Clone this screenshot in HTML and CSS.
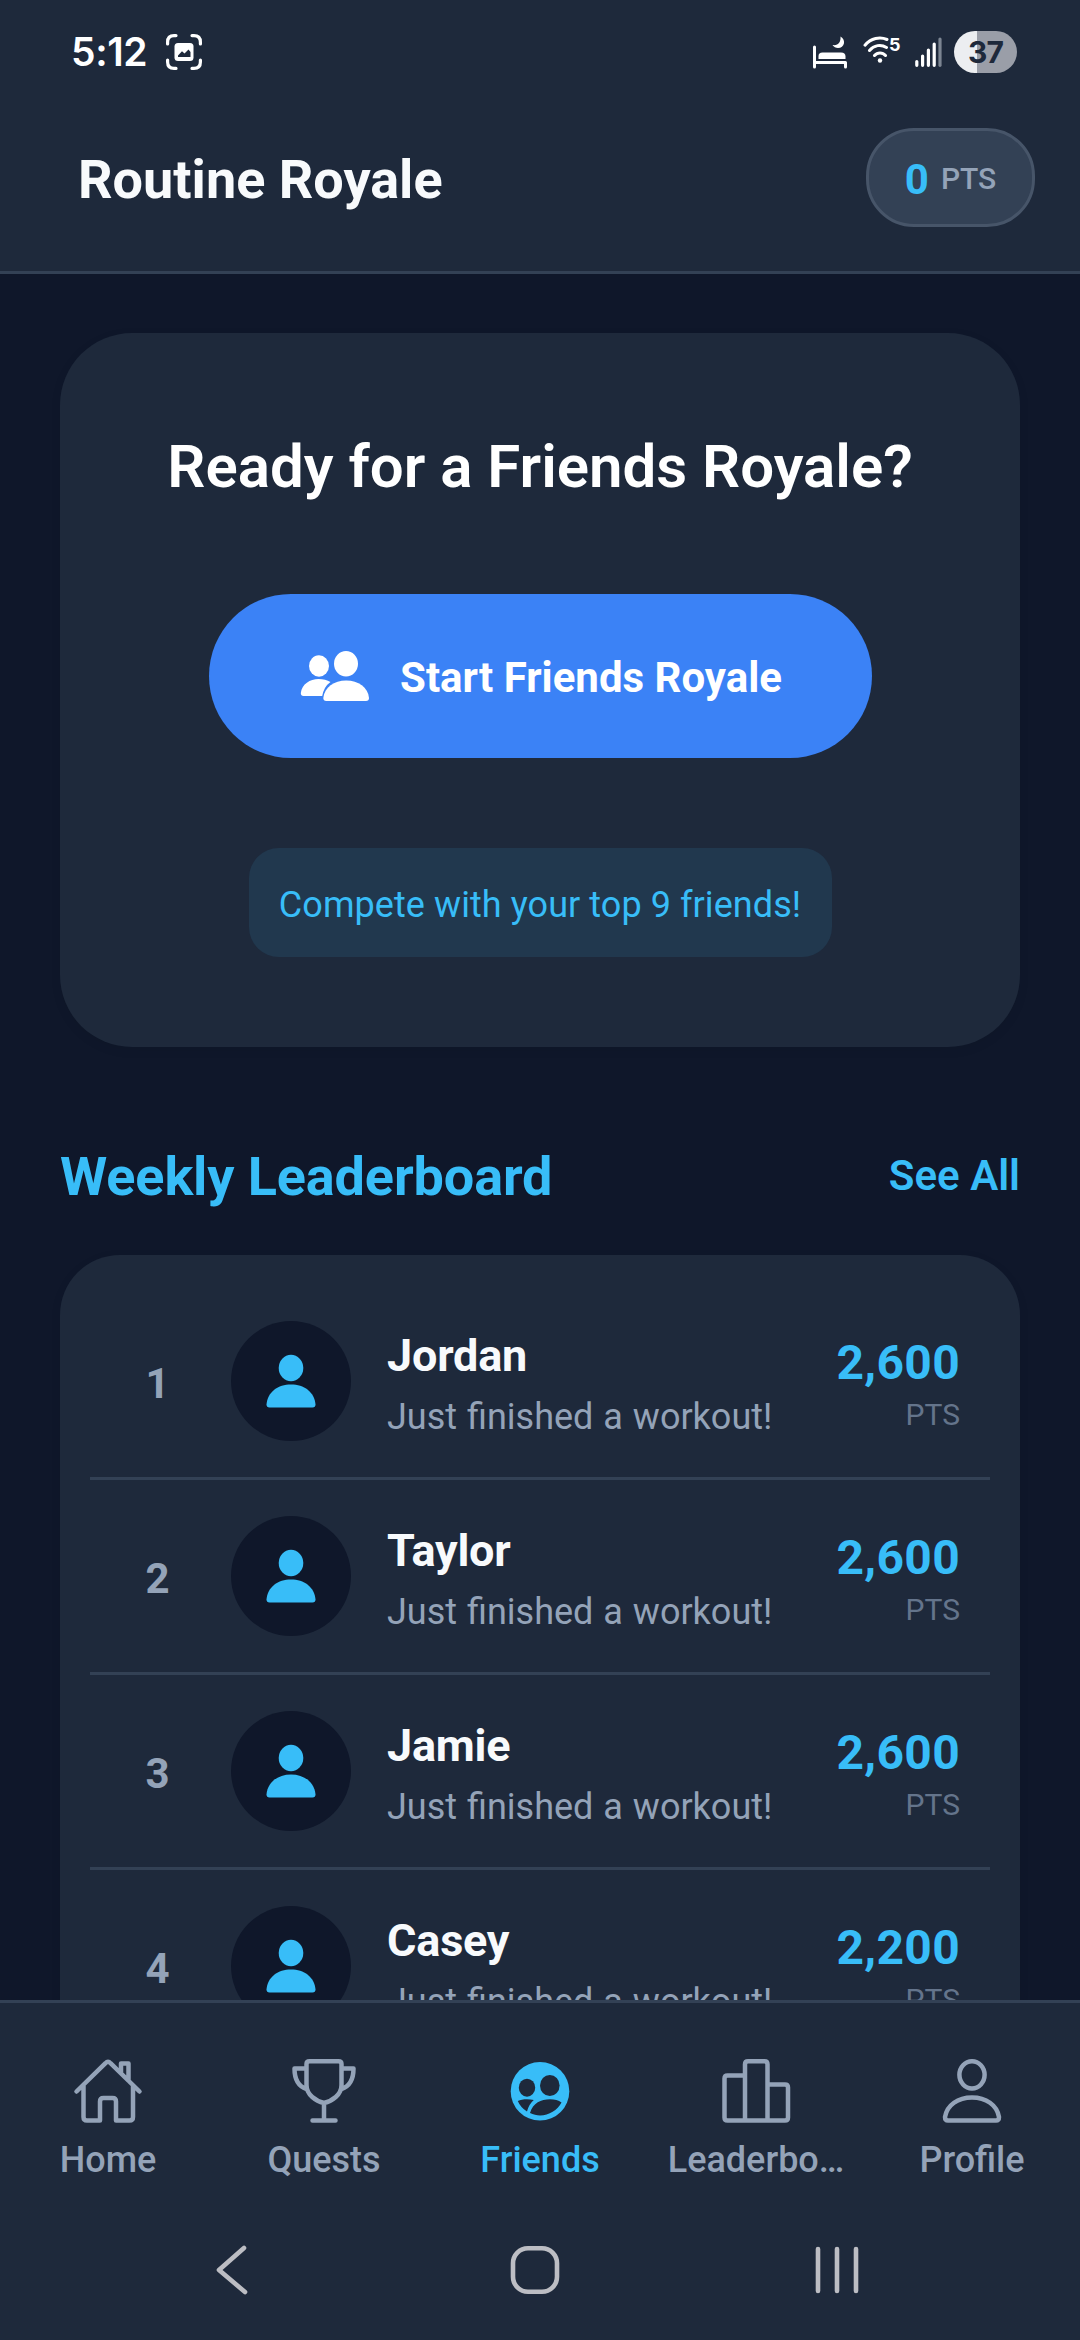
FILE: index.html
```html
<!DOCTYPE html>
<html lang="en">
<head>
<meta charset="utf-8">
<title>Routine Royale</title>
<link rel="stylesheet" href="styles.css">
</head>
<body>
<svg class="defs" width="0" height="0" aria-hidden="true">
  <symbol id="person" viewBox="0 0 60 60">
    <ellipse cx="30" cy="17" rx="12.3" ry="13.2"/>
    <path d="M5.5 53.500C6.500 41 17 33.500 30 33.500S53.500 41 54.500 53.500Q54.500 56.500 51.500 56.500H8.500Q5.500 56.500 5.500 53.500Z"/>
  </symbol>
</svg>
<div class="screen">
  <header class="header">
    <div class="status">
      <div class="status-left">
        <span class="clock">5:12</span>
        <svg width="36" height="36" viewBox="0 0 36 36" fill="none" stroke="#fff" stroke-width="3.2" stroke-linecap="round">
          <path d="M1.600 10V8Q1.600 1.600 8 1.600H10M26 1.600H28Q34.400 1.600 34.400 8V10M34.400 26V28Q34.400 34.400 28 34.400H26M10 34.400H8Q1.600 34.400 1.600 28V26"/>
          <rect x="8.500" y="9" width="19" height="18" rx="3.500" fill="#fff" stroke="none"/>
          <path d="M12 23V21.500L16 17.200L18.500 19.500L22.500 15.500L24.500 18V23Z" fill="#1e293b" stroke="none"/>
        </svg>
      </div>
      <div class="status-right">
        <svg width="36" height="33" viewBox="0 0 36 33" fill="#fff">
          <path d="M1.500 11V31M1.500 26.500H32.500V31" fill="none" stroke="#fff" stroke-width="3" stroke-linecap="round" stroke-linejoin="round"/>
          <path d="M5.500 23V20Q5.500 16.500 9.500 16.500H28Q32.500 16.500 32.500 20.500V23Z"/>
          <path d="M27.500 0.500C33.500 4 31.500 12 25 12Q21.500 12 19.500 9C25 10 28 6 27.500 0.500Z"/>
        </svg>
        <div class="wifi">
          <svg width="26" height="28" viewBox="0 0 26 28" fill="none" stroke="#fff" stroke-width="3" stroke-linecap="round">
            <path d="M2 9.200C8 2 17 .5 24 3.500M6.500 14.500C11 9 18 8 23.500 11.500M11.500 19.500C14.500 16 19.500 16 22.500 19.500"/>
            <circle cx="17" cy="24.500" r="2.200" fill="#fff" stroke="none"/>
          </svg>
          <span class="wifi-num">5</span>
        </div>
        <svg class="signal" width="27" height="30" viewBox="0 0 27 30" stroke="#fff" stroke-width="3.200" stroke-linecap="round">
          <path d="M1.800 24.500V28.300M7.600 19V28.300M13.400 13V28.300M19.200 7V28.300"/>
          <path d="M25 2V28.300" stroke="#7c8592"/>
        </svg>
        <span class="battery">37</span>
      </div>
    </div>
    <div class="appbar">
      <h1 class="app-title">Routine Royale</h1>
      <div class="points"><span class="points-num">0</span><span class="points-unit">PTS</span></div>
    </div>
  </header>

  <main class="content">
    <section class="royale">
      <h2 class="royale-title">Ready for a Friends Royale?</h2>
      <div class="start">
        <svg width="70" height="52" viewBox="0 0 70 52" fill="#fff">
          <ellipse cx="19" cy="16" rx="10" ry="10.700"/>
          <ellipse cx="46" cy="13.700" rx="12" ry="12.700"/>
          <path d="M.8 43C2 34 10 29 18.500 29Q25.500 29 30.500 32Q24 36.500 22.200 46H3.500Q.8 46 .8 43Z"/>
          <path d="M23.300 48C24.500 37 34 30.500 46.200 30.500S68 37 69 48Q69 51 66 51H26.300Q23.300 51 23.300 48Z"/>
        </svg>
        <span class="start-text">Start Friends Royale</span>
      </div>
      <div class="hint">Compete with your top 9 friends!</div>
    </section>

    <div class="section-head">
      <h2 class="section-title">Weekly Leaderboard</h2>
      <span class="see-all">See All</span>
    </div>

    <section class="board">
      <div class="row">
        <span class="rank">1</span>
        <span class="avatar"><svg width="60" height="60"><use href="#person"/></svg></span>
        <div class="who"><div class="name">Jordan</div><div class="note">Just finished a workout!</div></div>
        <div class="score"><div class="score-num">2,600</div><div class="score-unit">PTS</div></div>
      </div>
      <div class="row">
        <span class="rank">2</span>
        <span class="avatar"><svg width="60" height="60"><use href="#person"/></svg></span>
        <div class="who"><div class="name">Taylor</div><div class="note">Just finished a workout!</div></div>
        <div class="score"><div class="score-num">2,600</div><div class="score-unit">PTS</div></div>
      </div>
      <div class="row">
        <span class="rank">3</span>
        <span class="avatar"><svg width="60" height="60"><use href="#person"/></svg></span>
        <div class="who"><div class="name">Jamie</div><div class="note">Just finished a workout!</div></div>
        <div class="score"><div class="score-num">2,600</div><div class="score-unit">PTS</div></div>
      </div>
      <div class="row">
        <span class="rank">4</span>
        <span class="avatar"><svg width="60" height="60"><use href="#person"/></svg></span>
        <div class="who"><div class="name">Casey</div><div class="note">Just finished a workout!</div></div>
        <div class="score"><div class="score-num">2,200</div><div class="score-unit">PTS</div></div>
      </div>
    </section>
  </main>

  <nav class="tabs">
    <div class="tab">
      <svg class="tab-icon" viewBox="0 0 72 72">
        <path d="M4.500 36.500L33.500 8.200Q36 5.500 38.500 8.200L67.500 36.500M11.500 31V62Q11.500 65.500 15 65.500H28V46.500Q28 43 31.500 43H40.500Q44 43 44 46.500V65.500H57.500Q61 65.500 61 62V31M49 17V8.500H56.500V25.500"/>
      </svg>
      <span class="tab-label">Home</span>
    </div>
    <div class="tab">
      <svg class="tab-icon" viewBox="0 0 72 72">
        <path d="M18.500 9Q18.500 6.200 21.500 6.200H50.500Q53.500 6.200 53.500 9V30C53.500 40 44 46 36 48C28 46 18.500 40 18.500 30ZM18.500 13.500H6.500C6.500 25 11 31.500 18.500 34M53.500 13.500H65.500C65.500 25 61 31.500 53.500 34M36 48V65.500M24.500 65.500H47.500"/>
      </svg>
      <span class="tab-label">Quests</span>
    </div>
    <div class="tab active">
      <svg class="tab-icon solid" viewBox="0 0 72 72">
        <circle cx="36" cy="36.200" r="29.300"/>
        <g class="cutout">
          <ellipse cx="23" cy="32.700" rx="8.200" ry="9"/>
          <ellipse cx="45.800" cy="30.500" rx="9.800" ry="10.500"/>
          <path d="M13.800 46C18 43.800 25 43.800 29.800 45Q25 49 23 56.500Q16.500 52.500 13.800 46ZM26 58C29 48 37 44.300 46 44.300Q53 44.300 57.500 47.500C52 58 38 64 26 58Z"/>
        </g>
      </svg>
      <span class="tab-label">Friends</span>
    </div>
    <div class="tab">
      <svg class="tab-icon" viewBox="0 0 72 72">
        <path d="M25 65.500V9.200Q25 6.200 28 6.200H44.500Q47.500 6.200 47.500 9.200V65.500M25 20.500H7.500Q4.500 20.500 4.500 23.500V62.500Q4.500 65.500 7.500 65.500H65Q68 65.500 68 62.500V32.500Q68 29.500 65 29.500H47.500"/>
      </svg>
      <span class="tab-label">Leaderbo…</span>
    </div>
    <div class="tab">
      <svg class="tab-icon" viewBox="0 0 72 72">
        <ellipse cx="36" cy="19.800" rx="12.600" ry="13.600"/>
        <path d="M9 62C11 50 22 42.500 36 42.500S61 50 63 62Q63 65.500 60 65.500H12Q9 65.500 9 62Z"/>
      </svg>
      <span class="tab-label">Profile</span>
    </div>
  </nav>

  <div class="sysnav">
    <svg width="60" height="60" viewBox="0 0 60 60"><path d="M42 8L17 30L43 52"/></svg>
    <svg width="60" height="60" viewBox="0 0 60 60"><rect x="8" y="8.200" width="44" height="43.600" rx="15"/></svg>
    <svg width="60" height="60" viewBox="0 0 60 60"><path d="M11 9V51M30 9V51M49 9V51"/></svg>
  </div>
</div>
</body>
</html>
```
FILE: styles.css
```css
* { box-sizing: border-box; margin: 0; padding: 0; }

body {
  background: #0f172a;
  font-family: Roboto, "Liberation Sans", sans-serif;
  color: #f8fafc;
}

svg { display: block; flex: none; }
.defs { position: absolute; }

.screen {
  width: 1080px;
  height: 2340px;
  display: flex;
  flex-direction: column;
  overflow: hidden;
  white-space: nowrap;
}

/* Header */
.header {
  height: 274px;
  flex: none;
  background: #1e293b;
  border-bottom: 3px solid #334155;
}

.status {
  height: 104px;
  padding: 0 63px 0 71px;
  display: flex;
  align-items: center;
  justify-content: space-between;
}

.status-left, .status-right { display: flex; align-items: center; }
.status-left { gap: 19px; }

.clock {
  font: 600 39px/40px Inter, sans-serif;
  letter-spacing: -.4px;
  color: #fff;
}

.wifi {
  width: 38px;
  height: 28px;
  margin: 0 0 4px 14px;
  display: flex;
  align-items: flex-start;
}

.wifi-num { font: 700 18px/18px Inter, sans-serif; color: #fff; }
.signal { margin: 0 12px 0 14px; }

.battery {
  width: 63px;
  height: 42px;
  border-radius: 21px;
  background: linear-gradient(90deg, #eceef1 23px, #9a9ea8 23px);
  color: #1e293b;
  font: 700 30px/42px Inter, sans-serif;
  letter-spacing: -1px;
  text-align: center;
}

.appbar {
  height: 147px;
  padding: 0 45px 0 78px;
  display: flex;
  align-items: center;
  justify-content: space-between;
}

.app-title { font-size: 54px; font-weight: 700; line-height: 64px; padding-top: 4px; }

.points {
  width: 169px;
  height: 99px;
  border: 3px solid #475569;
  border-radius: 48px;
  background: #334155;
  display: flex;
  align-items: center;
  justify-content: center;
  gap: 12px;
}

.points-num { font-size: 42px; font-weight: 700; color: #38bdf8; padding-top: 3px; }
.points-unit { font-size: 30px; font-weight: 500; color: #94a3b8; padding-top: 2px; }

/* Content */
.content {
  flex: 1;
  min-height: 0;
  overflow: hidden;
  padding: 59px 60px 0;
}

.royale {
  height: 714px;
  border-radius: 72px;
  background: #1e293b;
  box-shadow: 0 3px 12px rgba(0, 0, 0, .06);
  display: flex;
  flex-direction: column;
  align-items: center;
  padding-top: 98px;
}

.royale-title { font-size: 60px; font-weight: 600; line-height: 71px; color: #fff; }

.start {
  width: 663px;
  height: 164px;
  margin-top: 92px;
  padding-left: 2px;
  border-radius: 82px;
  background: #3b82f6;
  display: flex;
  align-items: center;
  justify-content: center;
  gap: 30px;
}

.start-text { font-size: 42px; font-weight: 700; color: #fff; padding-top: 3px; }

.hint {
  width: 583px;
  height: 109px;
  margin-top: 90px;
  border-radius: 30px;
  background: #21384e;
  color: #38bdf8;
  font-size: 36px;
  line-height: 115px;
  letter-spacing: .07px;
  text-align: center;
}

.section-head {
  height: 208px;
  padding-top: 98px;
  display: flex;
  justify-content: space-between;
}

.section-title {
  font-size: 54px;
  font-weight: 700;
  line-height: 64px;
  letter-spacing: -.12px;
  color: #38bdf8;
}

.see-all { font-size: 42px; font-weight: 600; line-height: 61px; color: #38bdf8; }

.board {
  height: 900px;
  border-radius: 60px;
  background: #1e293b;
  box-shadow: 0 3px 12px rgba(0, 0, 0, .06);
  padding: 30px 30px 0;
}

.row {
  height: 195px;
  border-bottom: 3px solid #334155;
  padding: 0 30px;
  display: flex;
  align-items: center;
}

.rank {
  width: 75px;
  text-align: center;
  font-size: 42px;
  font-weight: 700;
  color: #94a3b8;
  padding-top: 5px;
}

.avatar {
  width: 120px;
  height: 120px;
  margin: 0 36px;
  border-radius: 60px;
  background: #0f172a;
  color: #38bdf8;
  fill: currentColor;
  display: flex;
  align-items: center;
  justify-content: center;
}

.who { flex: 1; padding-top: 12px; }
.name { font-size: 45px; font-weight: 700; line-height: 60px; letter-spacing: -.2px; }
.note {
  font-size: 36px;
  line-height: 63px;
  /* stretches the line while leaving the fi ligature intact */
  word-spacing: 1px;
  color: #94a3b8;
}

.score { text-align: right; padding-top: 15px; line-height: 52px; }
.score-num { font-size: 48px; font-weight: 700; letter-spacing: .3px; color: #38bdf8; }
.score-unit { font-size: 30px; color: #64748b; }

/* Tab bar */
.tabs {
  height: 200px;
  flex: none;
  background: #1e293b;
  border-top: 3px solid #334155;
  display: flex;
}

.tab {
  width: 216px;
  padding-top: 52px;
  display: flex;
  flex-direction: column;
  align-items: center;
  color: #94a3b8;
}

.tab.active { color: #38bdf8; }

.tab-icon {
  width: 72px;
  height: 72px;
  fill: none;
  stroke: currentColor;
  stroke-width: 4.500;
  stroke-linecap: round;
  stroke-linejoin: round;
}

.tab-icon.solid { fill: currentColor; stroke: none; }
.cutout { fill: #1e293b; }

.tab-label { margin-top: 12px; font-size: 36px; font-weight: 500; line-height: 42px; }

/* System navigation */
.sysnav {
  height: 140px;
  flex: none;
  padding: 40px 213px 0 202px;
  background: #1e293b;
  display: flex;
  justify-content: space-between;
  fill: none;
  stroke: #bcbdc3;
  stroke-width: 4.600;
  stroke-linecap: round;
  stroke-linejoin: round;
}
```
